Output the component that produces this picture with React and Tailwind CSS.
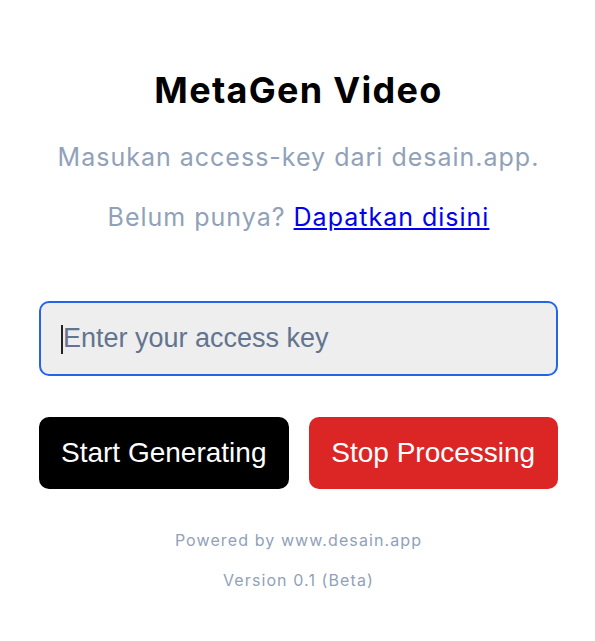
export default function App() {
  return (
    <div className="min-h-[641px] bg-white flex flex-col items-center pl-[2px]" style={{ fontFamily: 'Inter, "Noto Sans", sans-serif' }}>
      <h1 className="mt-[67px] text-[36px] leading-[46px] font-bold tracking-[1.3px] text-black">MetaGen Video</h1>
      <p className="mt-[28px] text-[25px] leading-[32px] tracking-[1px] text-slate-400">Masukan access-key dari desain.app.</p>
      <p className="mt-[28px] text-[25px] leading-[32px] tracking-[1px] text-slate-400">
        Belum punya?{' '}
        <a href="#" className="text-[#0000ee] underline">Dapatkan disini</a>
      </p>

      <div className="w-[519px] mt-[68px] relative">
        <input
          type="text"
          placeholder="Enter your access key"
          className="block w-full h-[75px] rounded-[10px] border-2 border-[#2563eb] bg-[#eeeeee] pl-[22px] text-[27px] text-slate-700 placeholder:text-slate-500 outline-none"
          style={{ fontFamily: '"Liberation Sans", Arial, sans-serif' }}
        />
        <span className="absolute left-[22px] top-[24px] w-[2px] h-[29px] bg-[#222]" />
      </div>

      <div className="w-[519px] mt-[41px] flex gap-[20px]" style={{ fontFamily: '"Liberation Sans", Arial, sans-serif' }}>
        <button className="flex-1 h-[72px] rounded-[10px] bg-black text-white text-[28px]">Start Generating</button>
        <button className="flex-1 h-[72px] rounded-[10px] bg-[#dc2626] text-white text-[28px]">Stop Processing</button>
      </div>

      <p className="mt-[39px] text-[16px] leading-[24px] tracking-[1.1px] text-slate-400">Powered by www.desain.app</p>
      <p className="mt-[16px] text-[16px] leading-[24px] tracking-[1.1px] text-slate-400">Version 0.1 (Beta)</p>
    </div>
  )
}
